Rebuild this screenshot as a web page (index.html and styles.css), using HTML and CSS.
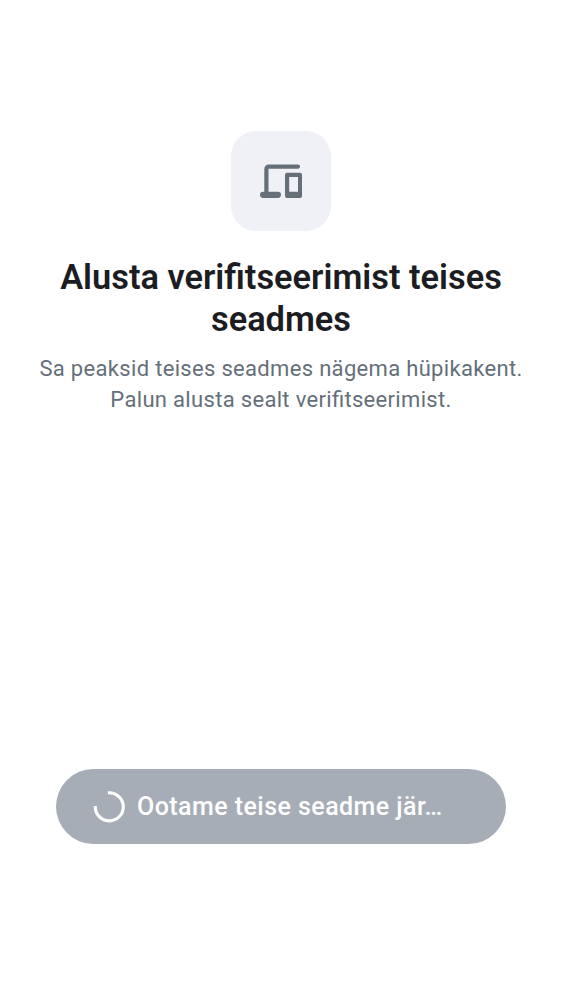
FILE: index.html
```html
<!DOCTYPE html>
<html lang="et">
<head>
<meta charset="utf-8">
<title>Verifitseerimine</title>
<link rel="stylesheet" href="styles.css">
</head>
<body>
<main class="screen">
  <section class="intro">
    <div class="icon-tile">
      <svg class="devices" viewBox="0 0 50 50" aria-hidden="true">
        <path d="M10.400 38V12.900a2.300 2.300 0 0 1 2.300-2.300H42" fill="none" stroke="#656f7a" stroke-width="4.200" stroke-linecap="round"/>
        <rect x="4" y="35.700" width="21" height="6.200" rx="3.100" fill="#656f7a"/>
        <path fill="#656f7a" fill-rule="evenodd" d="M31 16.800h13a2 2 0 0 1 2 2v21.100a2 2 0 0 1-2 2H31a2 2 0 0 1-2-2V18.800a2 2 0 0 1 2-2zM33.200 20.900v14.800h8.800V20.900z"/>
      </svg>
    </div>
    <h1 class="title">Alusta verifitseerimist teises<br>seadmes</h1>
    <p class="subtitle">Sa peaksid teises seadmes nägema hüpikakent.<br>Palun alusta sealt verifitseerimist.</p>
  </section>
  <button class="action" disabled>
    <svg class="spinner" viewBox="0 0 32 32" aria-hidden="true"><path d="M14.900 1.900A14 14 0 1 1 2.300 15" fill="none" stroke="#fff" stroke-width="3.100"/></svg>
    <span class="label">Ootame teise seadme jär…</span>
  </button>
</main>
</body>
</html>
```
FILE: styles.css
```css
body { margin: 0; background: #fff; font-family: Roboto, sans-serif; }
.screen { box-sizing: border-box; height: 1000px; padding: 131px 0 156px; display: flex; flex-direction: column; justify-content: space-between; align-items: center; }
.intro { display: flex; flex-direction: column; align-items: center; text-align: center; }
.icon-tile { width: 100px; height: 100px; border-radius: 25px; background: #f0f1f6; display: grid; place-items: center; }
.devices { width: 50px; height: 50px; }
.title { margin: 25px 0 0; font-size: 34.400px; line-height: 42px; font-weight: 600; color: #1b1d22; white-space: nowrap; }
.subtitle { margin: 13px 0 0; font-size: 22px; line-height: 31px; letter-spacing: .32px; font-feature-settings: "liga" 1; color: #656f7a; white-space: nowrap; }
.action { box-sizing: border-box; width: 450px; height: 75px; border: 0; border-radius: 38px; padding: 0 37px; background: #a6adb7; color: #fff; font-family: inherit; display: flex; align-items: center; gap: 12px; }
.spinner { width: 32px; height: 32px; flex: none; }
.label { font-size: 25px; font-weight: 500; letter-spacing: .45px; white-space: nowrap; }
```
